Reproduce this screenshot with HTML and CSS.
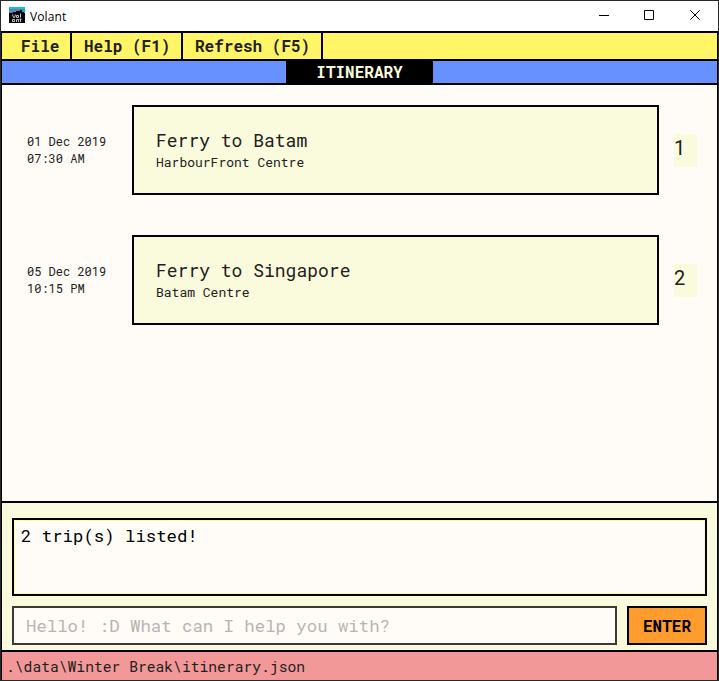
FILE: index.html
```html
<!DOCTYPE html>
<html lang="en">
<head>
<meta charset="utf-8">
<title>Volant</title>
<link rel="stylesheet" href="styles.css">
</head>
<body>
<div class="window">
  <header class="titlebar">
    <svg class="logo" width="16" height="16" viewBox="0 0 16 16">
      <rect width="16" height="16" fill="#08080c"/>
      <path d="M0 0h16v2H0z" fill="#10c4cc"/>
      <path d="M0 2h16v1H0z" fill="#5a7fa8"/>
      <path d="M0 3h11v1H0z" fill="#b45bb8"/>
      <path d="M0 4h7v1H0zM13 3h3v3h-1V5h-2z" fill="#10b5bd"/>
      <path d="M0 5h4v1H0z" fill="#7763a8"/>
      <path d="M3.500 7.500l1 3h1l1-3M7.500 8.500h2v2h-2zM11.500 6.500v4M3.500 12.500h2v2h-2zM7.500 15v-2.500h2V15M11.500 11.500V15M10.500 12.500h2" fill="none" stroke="#d8d8d8" stroke-width=".9"/>
    </svg>
    <span class="app-name">Volant</span>
    <svg class="controls" width="103" height="12" viewBox="0 0 103 12" fill="none" stroke="#000" stroke-width="1">
      <path d="M0 5.500h10M45.500 .500h9v9h-9zM91.300 .300l9.400 9.400M100.700 .300l-9.400 9.400"/>
    </svg>
  </header>
  <div class="app">
    <nav class="menu">
      <span class="menu-item first">File</span>
      <span class="menu-item">Help (F1)</span>
      <span class="menu-item">Refresh (F5)</span>
    </nav>
    <div class="mode-bar"><span class="mode">ITINERARY</span></div>
    <main class="trips">
      <div class="trip">
        <div class="date">01 Dec 2019<br>07:30 AM</div>
        <div class="card"><div class="name">Ferry to Batam</div><div class="place">HarbourFront Centre</div></div>
        <div class="index">1</div>
      </div>
      <div class="trip">
        <div class="date">05 Dec 2019<br>10:15 PM</div>
        <div class="card"><div class="name">Ferry to Singapore</div><div class="place">Batam Centre</div></div>
        <div class="index">2</div>
      </div>
    </main>
    <section class="console">
      <div class="result">2 trip(s) listed!</div>
      <div class="command">
        <input class="input" type="text" placeholder="Hello! :D What can I help you with?">
        <button class="enter">ENTER</button>
      </div>
    </section>
    <footer class="status">.\data\Winter Break\itinerary.json</footer>
  </div>
</div>
</body>
</html>
```
FILE: styles.css
```css
* { box-sizing: border-box; }
body {
  margin: 0;
  font-family: "Roboto Mono", "DejaVu Sans Mono", monospace;
  color: #20201c;
}
.window {
  width: 719px;
  height: 681px;
  border: 1px solid #292929;
  display: flex;
  flex-direction: column;
  overflow: hidden;
}
.titlebar {
  height: 30px;
  flex: none;
  display: flex;
  align-items: center;
  background: #fff;
  padding: 0 16px 0 8px;
}
.logo { margin-top: -2px; }
.app-name {
  font: 12px/16px "Open Sans", "Noto Sans", sans-serif;
  letter-spacing: 0.1px;
  color: #000;
  margin: 1px 0 0 5px;
}
.controls { margin-left: auto; }
.app {
  flex: 1;
  display: flex;
  flex-direction: column;
  border: solid #000;
  border-width: 2px 1px 0;
}
.menu {
  height: 28px;
  display: flex;
  background: #fff566;
  border-bottom: 2px solid #000;
  font-size: 16px;
  font-weight: 700;
  line-height: 25px;
}
.menu-item {
  padding: 0 11px 0 12px;
  border-right: 2px solid #000;
  white-space: pre;
  width: 111px;
}
.menu-item.first { width: 70px; padding-left: 19px; }
.menu-item:last-child { width: 140px; }
.mode-bar {
  height: 24px;
  display: flex;
  justify-content: center;
  background: #6691ff;
  border-bottom: 2px solid #000;
}
.mode {
  width: 147px;
  background: #000;
  color: #fafbdc;
  text-align: center;
  font-size: 16px;
  font-weight: 700;
  line-height: 21px;
}
.trips {
  height: 416px;
  background: #fffbf6;
  padding: 20px 20px 0 25px;
  display: flex;
  flex-direction: column;
  gap: 40px;
}
.trip { display: flex; align-items: center; height: 90px; }
.date { width: 105px; font-size: 12px; line-height: 17px; }
.card {
  width: 527px;
  height: 90px;
  border: 2px solid #000;
  background: #fafbdc;
  padding: 21px 22px;
}
.name { font-size: 18px; line-height: 24px; }
.place { font-size: 13px; line-height: 18px; margin-top: 1px; }
.index {
  width: 23px;
  height: 33px;
  margin-left: 15px;
  background: #fafbdc;
  font: 20px/28px Roboto, sans-serif;
}
.console {
  height: 149px;
  background: #fafbdc;
  border-top: 2px solid #000;
  padding: 15px 10px 0;
}
.result {
  height: 78px;
  border: 2px solid #000;
  box-shadow: inset 0 0 0 1px #ffff9f;
  background: #fffbf6;
  padding: 4px 7px;
  font-size: 17.333px;
  line-height: 24px;
  color: #000;
}
.command { display: flex; gap: 10px; margin-top: 10px; }
.input {
  flex: 1;
  min-width: 0;
  height: 39px;
  border: 2px solid #3b3939;
  border-radius: 0;
  background: #fffbf6;
  padding: 0 12px;
  font: 17.333px "Roboto Mono", "DejaVu Sans Mono", monospace;
}
.input::placeholder { color: #b5b5b5; opacity: 1; }
.enter {
  width: 80px;
  height: 39px;
  border: 2px solid #000;
  border-radius: 0;
  background: #ff9c2e;
  padding: 0;
  font: 700 16px "Roboto Mono", "DejaVu Sans Mono", monospace;
  color: #000;
}
.status {
  flex: 1;
  background: #f29898;
  border-top: 2px solid #000;
  padding-left: 4px;
  font-size: 14.667px;
  line-height: 29px;
}
```
